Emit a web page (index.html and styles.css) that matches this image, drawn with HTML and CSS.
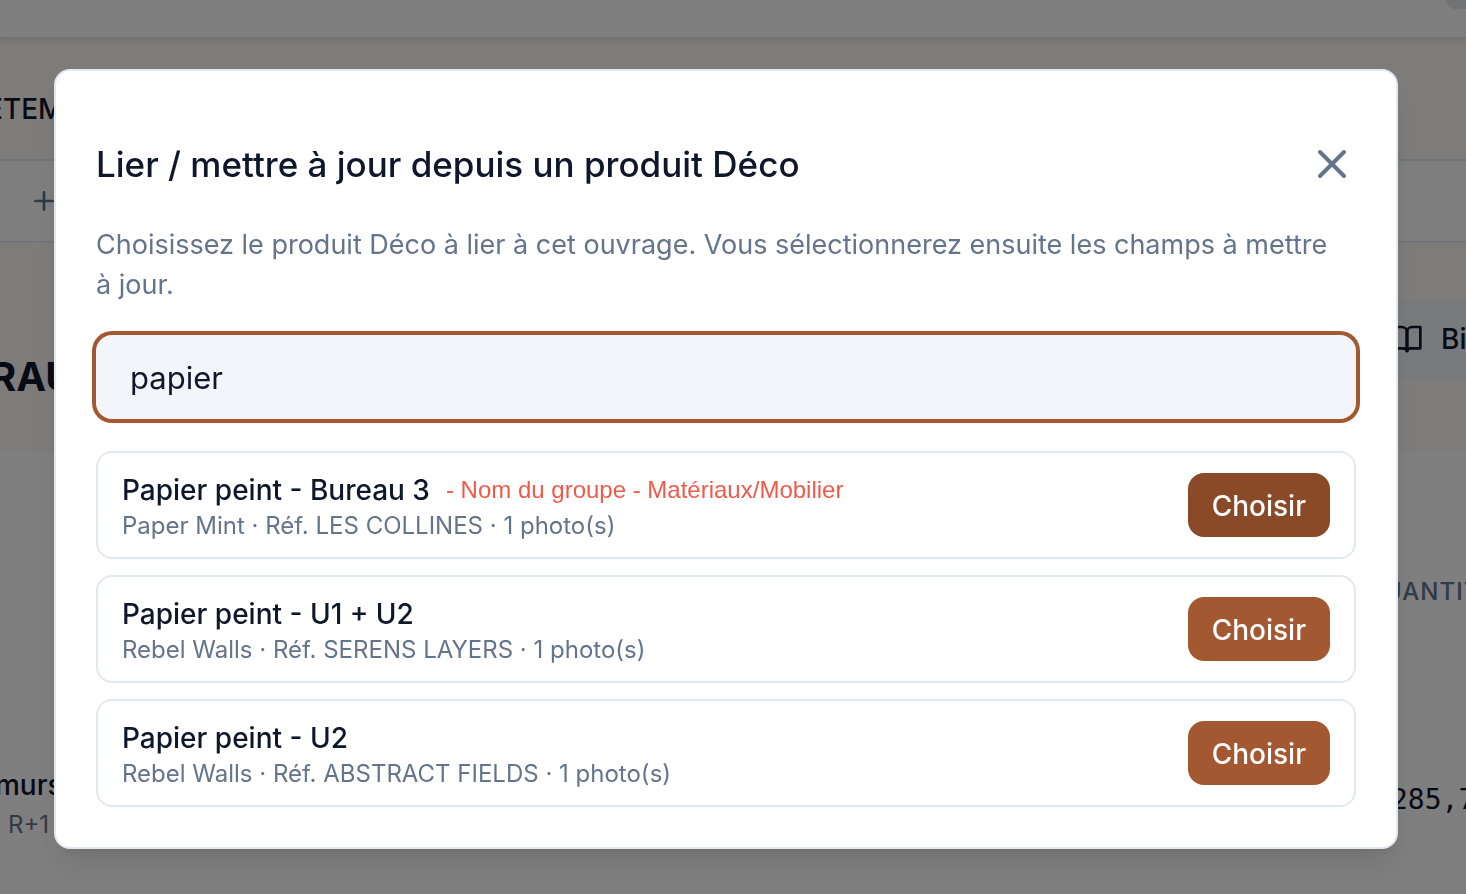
FILE: index.html
```html
<!DOCTYPE html>
<html lang="fr">
<head>
    <meta charset="UTF-8">
    <meta name="viewport" content="width=device-width, initial-scale=1.0">
    <title>Produit Déco</title>
    <link rel="stylesheet" href="styles.css">
</head>
<body>
    <div class="page">
        <div class="topbar"><div class="avatar"></div></div>
        <div class="section_head"><span class="section_name">ÊTEM</span></div>
        <div class="add_row">
            <svg class="icon_small" viewBox="0 0 24 24"><path d="M5.5 12h13M12 5.5v13"/></svg>
        </div>
        <div class="lot">
            <h1 class="lot_name">RAU</h1>
            <div class="library">
                <svg class="icon_small" viewBox="0 0 24 24"><path d="M12 6v15"/><path d="M2 3h6a4 4 0 0 1 4 4v14a3 3 0 0 0-3-2H2z"/><path d="M22 3h-6a4 4 0 0 0-4 4v14a3 3 0 0 1 3-2h7z"/></svg>
                <span>Bi</span>
            </div>
        </div>
        <div class="table_head"><span class="quantity_head">UANTIT</span></div>
        <div class="table_row">
            <div class="work">
                <div class="work_name">murs</div>
                <div class="work_place">R+1</div>
            </div>
            <span class="quantity">285,7</span>
        </div>
    </div>

    <div class="overlay">
        <div class="modal" role="dialog" aria-labelledby="modal_title">
            <div class="modal_head">
                <h2 class="modal_title" id="modal_title">Lier / mettre à jour depuis un produit Déco</h2>
                <button class="close" type="button" aria-label="Fermer">
                    <svg class="icon_close" viewBox="0 0 24 24"><path d="M18 6 6 18M6 6l12 12"/></svg>
                </button>
            </div>
            <label class="modal_text" for="search">Choisissez le produit Déco à lier à cet ouvrage. Vous sélectionnerez ensuite les champs à mettre à jour.</label>
            <input class="search" type="text" id="search" value="papier" autocomplete="off">
            <div class="products">
                <div class="product">
                    <div class="product_info">
                        <div class="product_name">Papier peint - Bureau 3 <span class="product_group">- Nom du groupe - Matériaux/Mobilier</span></div>
                        <div class="product_ref">Paper Mint · Réf. LES COLLINES · 1 photo(s)</div>
                    </div>
                    <button class="choose choose_active" type="button">Choisir</button>
                </div>
                <div class="product">
                    <div class="product_info">
                        <div class="product_name">Papier peint - U1 + U2</div>
                        <div class="product_ref">Rebel Walls · Réf. SERENS LAYERS · 1 photo(s)</div>
                    </div>
                    <button class="choose" type="button">Choisir</button>
                </div>
                <div class="product">
                    <div class="product_info">
                        <div class="product_name">Papier peint - U2</div>
                        <div class="product_ref">Rebel Walls · Réf. ABSTRACT FIELDS · 1 photo(s)</div>
                    </div>
                    <button class="choose" type="button">Choisir</button>
                </div>
            </div>
        </div>
    </div>
</body>
</html>
```
FILE: styles.css
```css
*{
    box-sizing: border-box;
}
body{
    margin: 0px;
    font-family: Inter, "Liberation Sans", sans-serif;
    font-size: 28px;
    line-height: 40px;
    color: #0f172a;
    background-color: white;
    overflow: hidden;
}
h1, h2{
    margin: 0px;
}
svg{
    display: block;
    flex: none;
    fill: none;
    stroke: currentColor;
    stroke-width: 2;
    stroke-linecap: round;
    stroke-linejoin: round;
}
.icon_small{
    width: 32px;
    height: 32px;
}

/* page behind the dialog */
.page{
    min-height: 100vh;
    overflow: hidden;
}
.topbar{
    display: flex;
    justify-content: flex-end;
    height: 39px;
    border-bottom: 2px solid #e2e8f0;
    box-shadow: 0 2px 6px rgba(0, 0, 0, 0.1);
    position: relative;
}
.avatar{
    width: 20px;
    height: 9px;
    background-color: #e5e7eb;
    border-bottom-left-radius: 16px;
}
.section_head{
    display: flex;
    align-items: center;
    height: 120px;
    padding-top: 20px;
    background-color: #fdf9f5;
}
.section_name{
    margin-left: -14px;
    font-weight: 500;
}
.add_row{
    display: flex;
    align-items: center;
    height: 84px;
    padding-left: 28px;
    color: #64748b;
    border-top: 2px solid #e2e8f0;
    border-bottom: 2px solid #e2e8f0;
}
.lot{
    display: flex;
    justify-content: space-between;
    align-items: flex-start;
    height: 208px;
    padding-top: 56px;
    background-color: #fdf9f5;
}
.lot_name{
    margin-left: -10px;
    padding-top: 52px;
    font-size: 40px;
    line-height: 52px;
    font-weight: 700;
}
.library{
    display: flex;
    align-items: center;
    gap: 18px;
    width: 106px;
    height: 80px;
    padding-left: 31px;
    font-weight: 500;
    background-color: #f1f5f9;
}
.table_head{
    display: flex;
    justify-content: flex-end;
    height: 306px;
    padding-top: 121px;
}
.quantity_head{
    width: 82px;
    font-size: 24px;
    font-weight: 500;
    letter-spacing: 1px;
    color: #64748b;
}
.table_row{
    display: flex;
    justify-content: space-between;
    padding-top: 8px;
}
.work{
    padding-left: 8px;
}
.work_name{
    margin-left: -13px;
    font-weight: 500;
}
.work_place{
    font-size: 24px;
    color: #64748b;
}
.quantity{
    width: 75px;
    padding-top: 15px;
    font-family: "DejaVu Sans Mono", monospace;
}

/* dialog */
.overlay{
    position: fixed;
    inset: 0;
    padding: 69px 68px 0px 54px;
    background-color: rgba(0, 0, 0, 0.5);
}
.modal{
    padding: 69px 40px 40px;
    background-color: white;
    border: 2px solid #e2e8f0;
    border-radius: 16px;
    box-shadow: 0 20px 30px -6px rgba(0, 0, 0, 0.1), 0 8px 12px -8px rgba(0, 0, 0, 0.1);
}
.modal_head{
    display: flex;
    justify-content: space-between;
    align-items: center;
}
.modal_title{
    font-size: 35px;
    line-height: 48px;
    font-weight: 500;
}
.close{
    padding: 0px;
    border: none;
    background: none;
    color: #64748b;
    cursor: pointer;
}
.icon_close{
    width: 48px;
    height: 48px;
}
.modal_text{
    display: block;
    margin-top: 37px;
    padding-right: 10px;
    font-size: 27px;
    color: #64748b;
}
.search{
    display: block;
    width: 100%;
    height: 84px;
    margin-top: 30px;
    padding: 0px 34px;
    font-family: inherit;
    font-size: 31px;
    color: #0f172a;
    background-color: #f2f5fa;
    border: none;
    border-radius: 16px;
    outline: none;
    box-shadow: 0 0 0 4px #a35831;
}
.products{
    display: flex;
    flex-direction: column;
    gap: 16px;
    margin-top: 32px;
}
.product{
    display: flex;
    justify-content: space-between;
    align-items: center;
    padding: 15px 24px;
    border: 2px solid #e2e8f0;
    border-radius: 16px;
}
.product_info{
    padding-top: 2px;
}
.product_name{
    display: flex;
    align-items: center;
    gap: 16px;
    font-weight: 500;
}
.product_group{
    font-family: "Liberation Sans", sans-serif;
    font-size: 24px;
    font-weight: 400;
    color: #f05a4b;
}
.product_ref{
    font-size: 24px;
    line-height: 32px;
    color: #64748b;
}
.choose{
    height: 64px;
    padding: 2px 24px 0px;
    font-family: inherit;
    font-size: 28px;
    font-weight: 500;
    color: white;
    background-color: #a35831;
    border: none;
    border-radius: 16px;
    cursor: pointer;
}
.choose_active, .choose:hover{
    background-color: #8a4a28;
}
```
